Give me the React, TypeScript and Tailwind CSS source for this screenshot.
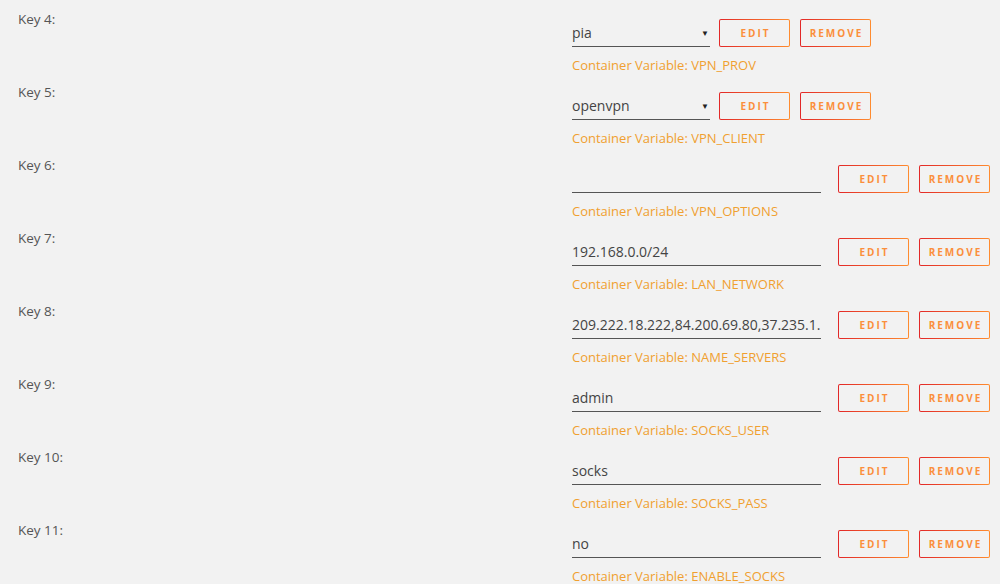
import React from "react";

type Row = { key: string; value: string; variable: string; select?: boolean };

const rows: Row[] = [
  { key: "Key 4:", value: "pia", variable: "VPN_PROV", select: true },
  { key: "Key 5:", value: "openvpn", variable: "VPN_CLIENT", select: true },
  { key: "Key 6:", value: "", variable: "VPN_OPTIONS" },
  { key: "Key 7:", value: "192.168.0.0/24", variable: "LAN_NETWORK" },
  { key: "Key 8:", value: "209.222.18.222,84.200.69.80,37.235.1.", variable: "NAME_SERVERS" },
  { key: "Key 9:", value: "admin", variable: "SOCKS_USER" },
  { key: "Key 10:", value: "socks", variable: "SOCKS_PASS" },
  { key: "Key 11:", value: "no", variable: "ENABLE_SOCKS" },
];

function GradButton({ label, ml }: { label: string; ml: string }) {
  return (
    <div className={`${ml} h-[28px] w-[71px] rounded-[2px] bg-[linear-gradient(90deg,#e22828,#ff8c2f)] p-px`}>
      <div className="flex h-full w-full items-center justify-center rounded-[1px] bg-[#f2f2f2] pl-[2px] text-[10px] font-bold tracking-[2px] text-[#fb8f3c]">
        {label}
      </div>
    </div>
  );
}

export default function App() {
  return (
    <div
      className="min-h-[584px] w-[1000px] bg-[#f2f2f2] pt-[10px]"
      style={{ fontFamily: '"Open Sans", "Noto Sans", sans-serif' }}
    >
      {rows.map((r) => (
        <div key={r.key} className="flex h-[73px] items-start">
          <div className="w-[572px] pl-[18px] text-[13.5px] leading-[18px] text-[#555]">{r.key}</div>
          <div className="flex flex-col pt-[9px]">
            <div className="flex items-start">
              {r.select ? (
                <div className="flex h-[28px] w-[138px] items-center justify-between border-b border-[#555] text-[14px] text-[#444]">
                  <span>{r.value}</span>
                  <span className="mr-[1px] text-[8px] text-[#222]">▼</span>
                </div>
              ) : (
                <div className="flex h-[28px] w-[249px] items-center overflow-hidden whitespace-nowrap border-b border-[#555] text-[14px] text-[#444]">
                  {r.value}
                </div>
              )}
              <GradButton label="EDIT" ml={r.select ? "ml-[9px]" : "ml-[17px]"} />
              <GradButton label="REMOVE" ml="ml-[10px]" />
            </div>
            <div className="mt-[9px] text-[13px] leading-[18px] text-[#f0a030]">
              Container Variable: {r.variable}
            </div>
          </div>
        </div>
      ))}
    </div>
  );
}
